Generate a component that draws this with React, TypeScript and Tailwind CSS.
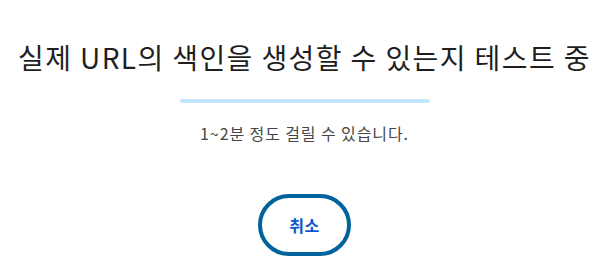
import React from 'react';

const App: React.FC = () => {
  return (
    <div
      className="w-[609px] h-[272px] bg-white flex flex-col items-center"
      style={{ fontFamily: '"Noto Sans CJK KR", "Noto Sans", Roboto, sans-serif' }}
    >
      {/* Title */}
      <h1 className="mt-[40px] text-[28px] leading-[34px] text-[#1f1f1f] tracking-[1.4px] whitespace-nowrap">
        실제 URL의 색인을 생성할 수 있는지 테스트 중
      </h1>

      {/* Progress bar */}
      <div className="mt-[25px] w-[250px] h-[4px] rounded-full bg-[#c2e7ff]" />

      {/* Subtitle */}
      <p className="mt-[19px] text-[16px] leading-[22px] text-[#444746] tracking-[0.9px]">1~2분 정도 걸릴 수 있습니다.</p>

      {/* Cancel button */}
      <button className="mt-[50px] w-[93px] h-[62px] rounded-full border-[4px] border-[#00639b] bg-white text-[16px] font-semibold text-[#0b57d0] tracking-[0.5px]">
        취소
      </button>
    </div>
  );
};

export default App;
